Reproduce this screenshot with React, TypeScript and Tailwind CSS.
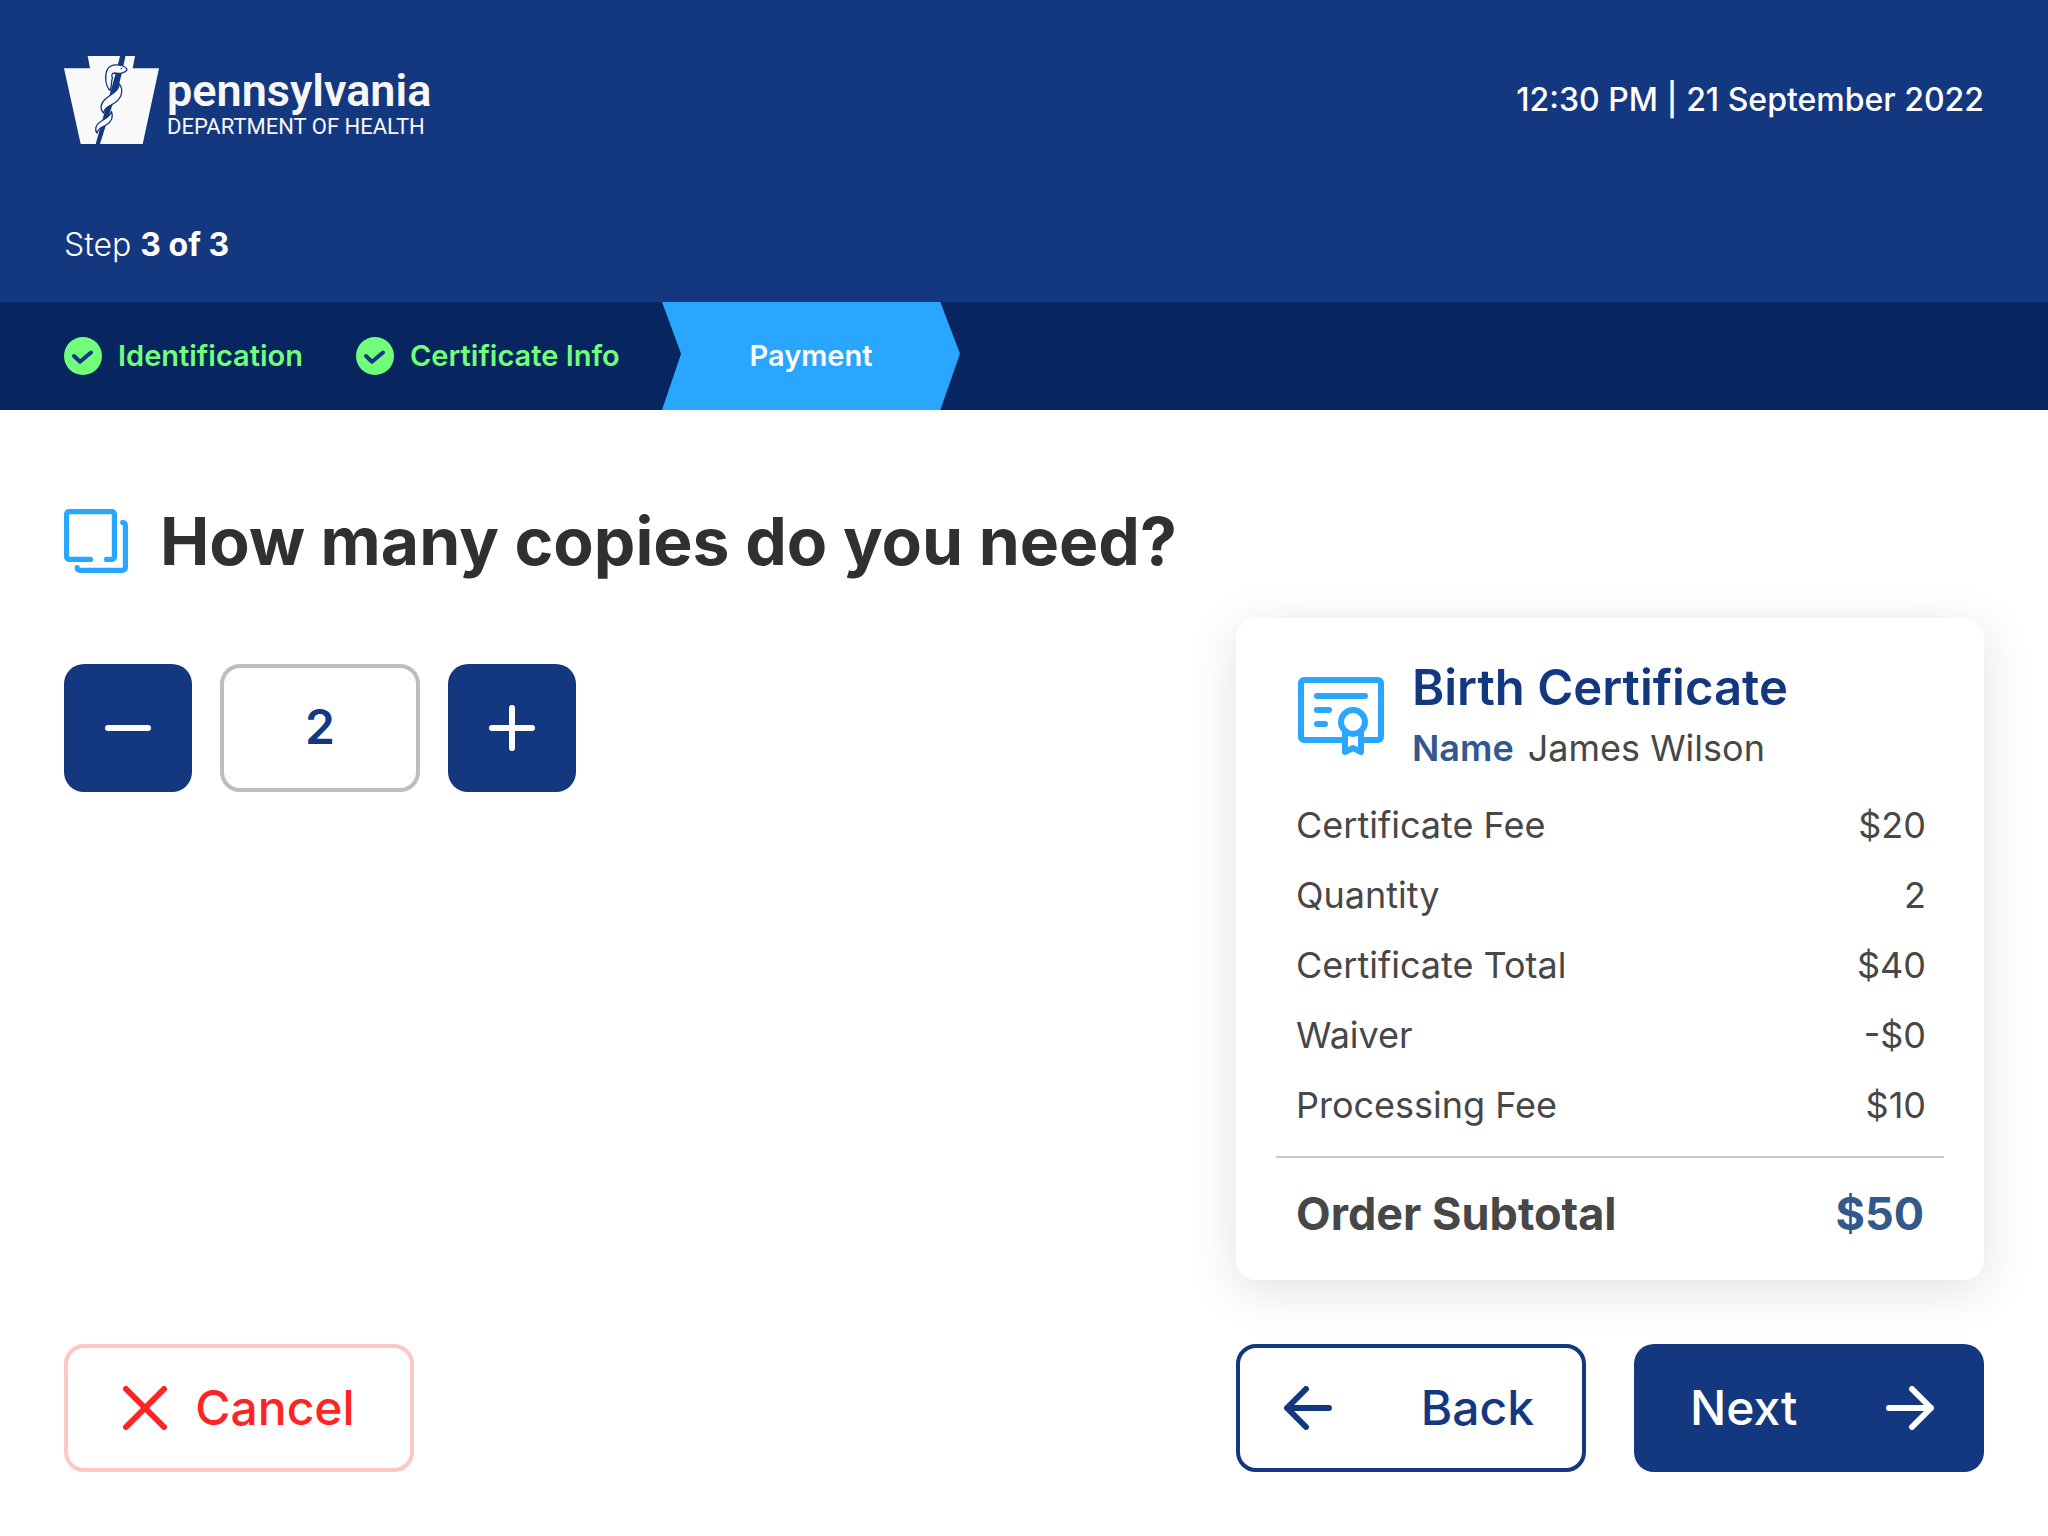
import { useState } from 'react';

const UNIT_FEE = 20;
const PROCESSING_FEE = 10;

function StateLogo() {
  return (
    <div className="flex items-start gap-2 text-[#f7f7f7]">
      <svg viewBox="0 0 95 88" className="w-[95px] h-[88px] shrink-0" aria-hidden="true">
        <path d="M23.7 0H71L68.7 12.3H95L78.7 88H16.7L0 12.3H26Z" fill="#fafafa" />
        {/* Staff */}
        <path d="M56 0H61.5L58 16L54 33L46 56L36 88H31.7L40 58L47 34L52 16Z" fill="#14387f" />
        {/* Serpent, tail to head */}
        <g fill="#fafafa" stroke="#14387f" strokeWidth="1.3" strokeLinejoin="round">
          <path d="M47.5 55.5C50 62 47 66 42 69C37 71.5 34 73 33 77C30.5 74 31.5 69 36 66C41 62.5 46 61 47.5 55.5Z" />
          <path d="M55.5 28C59.5 34 58 41 52 46C46 50.5 40.5 51 39.5 57C35.5 53 36.5 47 42 42.5C48 37.5 54 36 55.5 28Z" />
          <path d="M46 34.5C41 29 40.5 19 43.5 13C46 9 52 8 57 9.5C60.5 10.5 63 12 63 13.8C62 16.5 56 18 50.5 17C47 17.5 47.5 20 48.5 22C46.5 26 48.5 29 46 34.5Z" />
        </g>
        <circle cx="57.5" cy="12.5" r="0.8" fill="#14387f" />
      </svg>
      <div className="flex flex-col pt-3 font-['Roboto',sans-serif]">
        <span className="text-[45px] leading-[46px] font-semibold">pennsylvania</span>
        <span className="text-[22px] leading-[26px]">DEPARTMENT OF HEALTH</span>
      </div>
    </div>
  );
}

function CheckBadge() {
  return (
    <svg viewBox="0 0 38 38" className="w-[38px] h-[38px] shrink-0" aria-hidden="true">
      <circle cx="19" cy="19" r="19" fill="#71ff7b" />
      <path d="M10 19L16 24.7L27 15.5" fill="none" stroke="#14387f" strokeWidth="4" strokeLinecap="round" strokeLinejoin="round" />
    </svg>
  );
}

function CopiesIcon() {
  return (
    <svg viewBox="0 0 64 64" className="w-16 h-16 shrink-0" fill="none" stroke="#29a6ff" strokeWidth="5.2" strokeLinecap="round" aria-hidden="true">
      <path d="M26.5 50.4H5.1A2.5 2.5 0 0 1 2.6 47.9V5.1A2.5 2.5 0 0 1 5.1 2.6H47.9A2.5 2.5 0 0 1 50.4 5.1V47.9A2.5 2.5 0 0 1 47.9 50.4H42.6" />
      <path d="M58.7 13.4Q61.4 13.8 61.4 17V58.4A3 3 0 0 1 58.4 61.4H16.4Q13.2 61.4 13.2 58.6" />
    </svg>
  );
}

function CertificateIcon() {
  return (
    <svg viewBox="0 0 86 78" className="w-[86px] h-[78px] shrink-0" fill="none" stroke="#29a6ff" strokeWidth="6" strokeLinecap="round" strokeLinejoin="round" aria-hidden="true">
      <path d="M44 63H6A3 3 0 0 1 3 60V6A3 3 0 0 1 6 3H80A3 3 0 0 1 83 6V60A3 3 0 0 1 80 63H66" />
      <path d="M19 19H67M19 33H31M19 47H27" />
      <circle cx="55" cy="45" r="12" />
      <path d="M47 56V75L55 71L63 75V56" />
    </svg>
  );
}

function ArrowIcon({ direction }: { direction: 'left' | 'right' }) {
  return (
    <svg viewBox="0 0 48 44" className="w-12 h-11 shrink-0" fill="none" stroke="currentColor" strokeWidth="6" strokeLinecap="round" strokeLinejoin="round" aria-hidden="true">
      <path d={direction === 'left' ? 'M45 22H3M22 3L3 22L22 41' : 'M3 22H45M26 3L45 22L26 41'} />
    </svg>
  );
}

export default function App() {
  const [copies, setCopies] = useState(2);
  const total = copies * UNIT_FEE;

  const rows = [
    { label: 'Certificate Fee', value: `$${UNIT_FEE}` },
    { label: 'Quantity', value: `${copies}` },
    { label: 'Certificate Total', value: `$${total}` },
    { label: 'Waiver', value: '-$0' },
    { label: 'Processing Fee', value: `$${PROCESSING_FEE}` },
  ];

  return (
    <div className="min-h-screen flex flex-col bg-white font-['Inter',sans-serif]">
      {/* Header */}
      <header className="bg-[#14387f] text-white px-16 pt-14 pb-9">
        <div className="flex items-start justify-between">
          <StateLogo />
          <p className="pt-6 text-[32px] leading-[40px] font-medium">12:30 PM | 21 September 2022</p>
        </div>
        <p className="mt-20 text-[32px] leading-[42px] font-light">
          Step <strong className="font-bold">3 of 3</strong>
        </p>
      </header>

      {/* Progress steps */}
      <nav aria-label="Progress" className="bg-[#07255e]">
        <ol className="flex h-[108px] pl-16 text-[29px] leading-[36px] font-semibold text-[#71ff7b]">
          <li className="w-[292px] flex items-center gap-4">
            <CheckBadge />
            Identification
          </li>
          <li className="w-[306px] flex items-center gap-4">
            <CheckBadge />
            Certificate Info
          </li>
          <li
            aria-current="step"
            className="w-[298px] flex items-center justify-center bg-[#29a6ff] text-white [clip-path:polygon(0_0,93.4%_0,100%_48%,93.4%_100%,0_100%,6.4%_48%)]"
          >
            Payment
          </li>
        </ol>
      </nav>

      <main className="grow flex flex-col justify-between gap-16 px-16 pt-[99px] pb-16">
        <div className="flex items-start justify-between">
          <div>
            <div className="flex items-center gap-8">
              <CopiesIcon />
              <h1 className="text-[66px] leading-[64px] font-bold text-[#303030] whitespace-nowrap">
                How many copies do you need?
              </h1>
            </div>

            {/* Quantity picker */}
            <div className="mt-[91px] flex gap-7">
              <button
                type="button"
                aria-label="Fewer copies"
                onClick={() => setCopies(Math.max(1, copies - 1))}
                className="w-32 h-32 rounded-[20px] bg-[#14387f] text-white flex items-center justify-center cursor-pointer"
              >
                <svg viewBox="0 0 46 46" className="w-[46px] h-[46px]" stroke="currentColor" strokeWidth="6" strokeLinecap="round">
                  <path d="M3 23H43" />
                </svg>
              </button>
              <input
                type="text"
                inputMode="numeric"
                aria-label="Number of copies"
                value={copies}
                onChange={(e) => setCopies(Number(e.target.value.replace(/\D/g, '')))}
                className="w-[200px] h-32 rounded-[20px] border-4 border-[#bdbdbd] pb-1 text-center text-[48px] font-semibold text-[#14387f]"
              />
              <button
                type="button"
                aria-label="More copies"
                onClick={() => setCopies(copies + 1)}
                className="w-32 h-32 rounded-[20px] bg-[#14387f] text-white flex items-center justify-center cursor-pointer"
              >
                <svg viewBox="0 0 46 46" className="w-[46px] h-[46px]" stroke="currentColor" strokeWidth="6" strokeLinecap="round">
                  <path d="M3 23H43M23 3V43" />
                </svg>
              </button>
            </div>
          </div>

          {/* Order summary */}
          <section className="mt-[109px] w-[748px] shrink-0 rounded-[20px] bg-white px-10 pt-10 pb-10 shadow-[0_10px_50px_rgba(0,0,0,0.12)]">
            <div className="flex items-start gap-7 px-[22px]">
              <div className="pt-[19px]">
                <CertificateIcon />
              </div>
              <div>
                <h2 className="text-[49px] leading-[60px] font-semibold text-[#14387f]">Birth Certificate</h2>
                <p className="text-[36px] leading-[60px] text-[#474747]">
                  <span className="mr-[14px] font-semibold text-[#33588c]">Name</span>
                  James Wilson
                </p>
              </div>
            </div>
            <table className="mt-3 w-full text-[36px] leading-[42px] text-[#474747]">
              <tbody>
                {rows.map((row) => (
                  <tr key={row.label} className="h-[70px]">
                    <th scope="row" className="pl-5 text-left font-normal">{row.label}</th>
                    <td className="pr-[18px] text-right">{row.value}</td>
                  </tr>
                ))}
              </tbody>
            </table>
            <p className="mt-4 flex justify-between border-t-2 border-[#c9cbcb] px-5 pt-[30px] text-[45px] leading-[52px] font-bold text-[#474747]">
              <span>Order Subtotal</span>
              <span className="text-[#33588c]">${total + PROCESSING_FEE}</span>
            </p>
          </section>
        </div>

        {/* Actions */}
        <div className="flex gap-12 text-[48px] leading-[60px] font-medium">
          <button type="button" className="mr-auto w-[350px] h-32 rounded-[20px] border-4 border-[#ffc6c8] text-[#ff2424] flex items-center justify-center gap-7 cursor-pointer">
            <svg viewBox="0 0 44 44" className="w-11 h-11 shrink-0" stroke="currentColor" strokeWidth="6" strokeLinecap="round" aria-hidden="true">
              <path d="M3 3L41 41M41 3L3 41" />
            </svg>
            Cancel
          </button>
          <button type="button" className="w-[350px] h-32 rounded-[20px] border-4 border-[#14387f] pl-11 pr-12 text-[#14387f] flex items-center justify-between cursor-pointer">
            <ArrowIcon direction="left" />
            Back
          </button>
          <button type="button" className="w-[350px] h-32 rounded-[20px] bg-[#14387f] pl-14 pr-[50px] text-white flex items-center justify-between cursor-pointer">
            Next
            <ArrowIcon direction="right" />
          </button>
        </div>
      </main>
    </div>
  );
}
